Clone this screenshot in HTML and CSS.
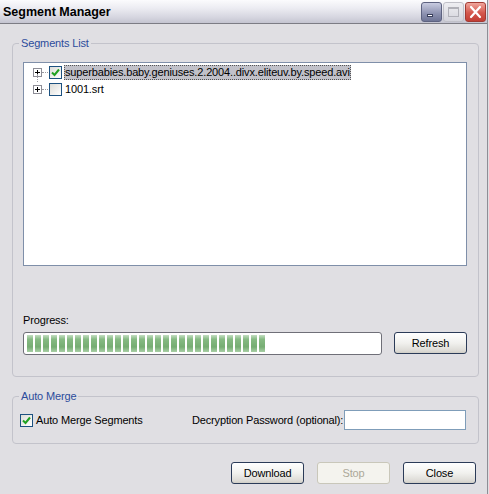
FILE: index.html
```html
<!DOCTYPE html>
<html>
<head>
<meta charset="utf-8">
<link rel="stylesheet" href="styles.css">
</head>
<body>
<div class="window">
  <div class="titlebar">
    <span class="title">Segment Manager</span>
    <div class="tbtns">
      <div class="tbtn min"><span class="dash"></span></div>
      <div class="tbtn max"><span class="sq"></span></div>
      <div class="tbtn close">
        <svg width="21" height="20" viewBox="0 0 21 20"><path d="M6 5 L15 15 M15 5 L6 15" stroke="#fff" stroke-width="2.2" stroke-linecap="round"/></svg>
      </div>
    </div>
  </div>
  <div class="client">
    <div class="group seg">
      <span class="legend">Segments List</span>
      <div class="tree">
        <div class="row">
          <span class="plus"></span><span class="hline"></span>
          <span class="chk checked"><svg width="11" height="11" viewBox="0 0 11 11"><path d="M2 5.5 L4.5 8 L9 2.5" stroke="#21a121" stroke-width="2" fill="none"/></svg></span>
          <span class="label sel">superbabies.baby.geniuses.2.2004..divx.eliteuv.by.speed.avi</span>
        </div>
        <div class="row">
          <span class="plus"></span><span class="hline"></span>
          <span class="chk"></span>
          <span class="label">1001.srt</span>
        </div>
        <span class="vline"></span>
      </div>
      <div class="plabel">Progress:</div>
      <div class="prow">
        <div class="progress"><div class="fill" style="width:240px"></div></div>
        <button class="btn">Refresh</button>
      </div>
    </div>
    <div class="group merge">
      <span class="legend">Auto Merge</span>
      <div class="mrow">
        <span class="chk checked"><svg width="11" height="11" viewBox="0 0 11 11"><path d="M2 5.5 L4.5 8 L9 2.5" stroke="#21a121" stroke-width="2" fill="none"/></svg></span>
        <span class="mlabel">Auto Merge Segments</span>
        <span class="pw">Decryption Password (optional):</span>
        <span class="input"></span>
      </div>
    </div>
    <div class="actions">
      <button class="btn">Download</button>
      <button class="btn disabled">Stop</button>
      <button class="btn">Close</button>
    </div>
  </div>
</div>
</body>
</html>
```
FILE: styles.css
```css
* { box-sizing: border-box; }
html, body { margin: 0; padding: 0; background: #e0dfe3; }
body { width: 489px; height: 494px; overflow: hidden; font-family: "Liberation Sans", Arial, sans-serif; font-size: 11px; letter-spacing: -0.15px; color: #000; }
.window { width: 488px; height: 494px; border-right: 1px solid #8e8e96; background: #e0dfe3; }
.titlebar {
  height: 24px; display: flex; align-items: center; justify-content: space-between;
  background: linear-gradient(#fbfbfd 0%, #ececf2 35%, #d6d6e0 75%, #c4c4d0 100%);
  border-bottom: 1px solid #7c7c84; padding-left: 3px; padding-right: 1px;
}
.title { font-weight: bold; font-size: 12.5px; letter-spacing: 0; color: #000; }
.tbtns { display: flex; gap: 1px; align-self: flex-start; margin-top: 2px; }
.tbtn { width: 21px; height: 20px; border-radius: 3px; position: relative; }
.tbtn.min { background: linear-gradient(#c8cbe0, #8c91b0 60%, #6f7596); border: 1px solid #5d6280; }
.tbtn.min .dash { position: absolute; left: 5px; bottom: 4px; width: 6px; height: 3px; background: #fff; border: 1px solid #3a3f5c; }
.tbtn.max { background: linear-gradient(#eeeef2, #d4d4dc); border: 1px solid #c0c0c8; }
.tbtn.max .sq { position: absolute; left: 4px; top: 4px; width: 11px; height: 10px; border: 1px solid #b0b0b8; border-top-width: 2px; }
.tbtn.close { background: linear-gradient(#f0a59c, #d4574c 55%, #c23e35); border: 1px solid #a23a33; }
.tbtn.close svg { position: absolute; left: -1px; top: -1px; }

.client { padding: 19px 8px 0 12px; }
.group { position: relative; border: 1px solid #c3c3cb; border-radius: 4px; }
.legend { position: absolute; top: -8px; left: 6px; padding: 0 2px; background: #e0dfe3; color: #2c4c9c; font-size: 11px; line-height: 14px; }
.seg { height: 334px; padding: 18px 11px 0 10px; }
.tree { position: relative; height: 204px; background: #fff; border: 1px solid #7f8fa9; padding: 1px 0 0 9px; }
.row { display: flex; align-items: center; height: 17px; position: relative; }
.plus { width: 9px; height: 9px; border: 1px solid #8d8d96; background: #fff; position: relative; flex: none; }
.plus::before { content: ""; position: absolute; left: 1px; top: 3px; width: 5px; height: 1px; background: #000; }
.plus::after { content: ""; position: absolute; left: 3px; top: 1px; width: 1px; height: 5px; background: #000; }
.hline { width: 6px; border-top: 1px dotted #9a9aa0; flex: none; margin-right: 1px; }
.vline { position: absolute; left: 13px; top: 11px; height: 8px; border-left: 1px dotted #9a9aa0; }
.chk { width: 13px; height: 13px; border: 1px solid #1c5180; background: linear-gradient(135deg, #dcdcd7, #fff); flex: none; display: flex; align-items: center; justify-content: center; margin-right: 2px; }
.label { line-height: 15px; font-size: 11px; padding: 0 1px; white-space: nowrap; }
.label.sel { background: #c1c1c9; outline: 1px dotted #555; outline-offset: -1px; }
.plabel { margin-top: 47px; height: 19px; line-height: 14px; }
.prow { display: flex; justify-content: space-between; align-items: flex-start; }
.progress { width: 359px; height: 23px; border: 1px solid #6f6f78; border-radius: 3px; background: #fff; padding: 2px 3px; }
.fill { height: 17px; background:
  repeating-linear-gradient(90deg, transparent 0 6px, #fff 6px 8px),
  linear-gradient(#c3dec1, #86ba83 25%, #76ad73 70%, #a9cfa6); }
.btn { width: 73px; height: 22px; border: 1px solid #2b3b58; border-radius: 3px; background: linear-gradient(#ffffff, #f1f1ee 50%, #dcdad5 90%, #cfcdc6); font-family: "Liberation Sans", Arial, sans-serif; font-size: 11px; letter-spacing: -0.15px; color: #000; padding: 0; margin: 0; }
.btn.disabled { border-color: #c9c7ba; background: #f4f3ee; color: #aca899; }
.merge { margin-top: 19px; height: 48px; padding: 13px 12px 0 7px; }
.mrow { display: flex; align-items: center; height: 20px; }
.mrow .chk { margin-right: 3px; }
.mlabel { width: 156px; flex: none; white-space: nowrap; }
.pw { flex: none; white-space: nowrap; }
.input { width: 122px; height: 20px; background: #fff; border: 1px solid #7f9db9; margin-left: auto; flex: none; }
.actions { display: flex; justify-content: flex-end; gap: 13px; margin-top: 18px; padding-right: 3px; }
```
